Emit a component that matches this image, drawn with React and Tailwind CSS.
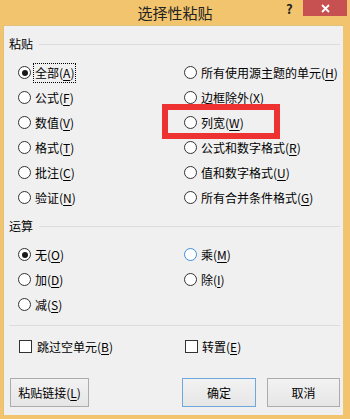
import React from "react";

const font = { fontFamily: '"Noto Sans CJK SC", "Microsoft YaHei", sans-serif' };

function Radio({ checked, hover }) {
  return (
    <span
      className={`relative flex h-[13px] w-[13px] shrink-0 items-center justify-center rounded-full border bg-white ${
        hover ? "border-[#3c8fdb]" : "border-[#333]"
      }`}
    >
      {checked && <span className="h-[6px] w-[6px] rounded-full bg-[#1a1a1a]" />}
    </span>
  );
}

function Check() {
  return <span className="h-[13px] w-[13px] shrink-0 border border-[#333] bg-white" />;
}

function Label({ text, k, focus }) {
  return (
    <span
      className={`px-[1px] leading-[18px] ${focus ? "outline outline-1 outline-dotted outline-[#000]" : ""}`}
    >
      {text}(<span className="underline underline-offset-2">{k}</span>)
    </span>
  );
}

function Option({ text, k, checked, focus, hover }) {
  return (
    <div className="flex h-[25px] items-center gap-[3px]">
      <Radio checked={checked} hover={hover} />
      <Label text={text} k={k} focus={focus} />
    </div>
  );
}

function Header({ title }) {
  return (
    <div className="flex h-[16px] items-center gap-[6px] pl-[5px] pr-[3px]">
      <span className="leading-[16px]">{title}</span>
      <div className="h-px flex-1 bg-[#dcdcdc]" />
    </div>
  );
}

function Btn({ children, primary, w }) {
  return (
    <div
      className={`flex h-[29px] ${w} items-center justify-center border bg-gradient-to-b from-[#f2f2f2] to-[#e6e6e6] ${
        primary ? "border-[#6ea6de]" : "border-[#acacac]"
      }`}
    >
      {children}
    </div>
  );
}

export default function App() {
  return (
    <div className="flex h-[419px] w-[350px] flex-col bg-[#f2c46d] text-[12px] text-black" style={font}>
      <div className="relative flex h-[25px] shrink-0 items-center justify-center">
        <span className="text-[15px] leading-[20px] text-[#222]">选择性粘贴</span>
        <span className="absolute left-[286px] top-[1px] text-[13px] font-bold leading-[15px] text-[#222]">?</span>
        <div className="absolute left-[303px] top-0 flex h-[16px] w-[44px] items-center justify-center bg-[#c75050]">
          <svg width="9" height="9" viewBox="0 0 9 9">
            <path d="M1 1L8 8M8 1L1 8" stroke="white" strokeWidth="1.8" />
          </svg>
        </div>
      </div>
      <div className="mb-[4px] ml-[3px] mr-[7px] flex flex-1 flex-col border-t border-l border-[#e2c17d] bg-[#f0f0f0]">
        <div className="mt-[10px]">
          <Header title="粘贴" />
        </div>
        <div className="relative mt-[8px]">
          <div className="grid grid-cols-[166px_1fr] pl-[14px]">
            <div className="flex flex-col">
              <Option text="全部" k="A" checked focus />
              <Option text="公式" k="F" />
              <Option text="数值" k="V" />
              <Option text="格式" k="T" />
              <Option text="批注" k="C" />
              <Option text="验证" k="N" />
            </div>
            <div className="flex flex-col">
              <Option text="所有使用源主题的单元" k="H" />
              <Option text="边框除外" k="X" />
              <Option text="列宽" k="W" />
              <Option text="公式和数字格式" k="R" />
              <Option text="值和数字格式" k="U" />
              <Option text="所有合并条件格式" k="G" />
            </div>
          </div>
          <div className="absolute left-[158px] top-[44px] h-[35px] w-[118px] border-[6px] border-[#ee3131]" />
        </div>
        <div className="mt-[8px]">
          <Header title="运算" />
        </div>
        <div className="mt-[8px] grid grid-cols-[166px_1fr] pl-[14px]">
          <div className="flex flex-col">
            <Option text="无" k="O" checked />
            <Option text="加" k="D" />
            <Option text="减" k="S" />
          </div>
          <div className="flex flex-col">
            <Option text="乘" k="M" hover />
            <Option text="除" k="I" />
          </div>
        </div>
        <div className="ml-[5px] mr-[3px] mt-[8px] h-px bg-[#dcdcdc]" />
        <div className="mt-[8px] grid grid-cols-[166px_1fr] pl-[15px]">
          <div className="flex h-[25px] items-center gap-[4px]">
            <Check />
            <Label text="跳过空单元" k="B" />
          </div>
          <div className="flex h-[25px] items-center gap-[3px]">
            <Check />
            <Label text="转置" k="E" />
          </div>
        </div>
        <div className="mt-[19px] flex items-center pl-[6px] pr-[3px]">
          <Btn w="w-[79px]">
            <Label text="粘贴链接" k="L" />
          </Btn>
          <div className="flex-1" />
          <Btn w="w-[74px]" primary>
            确定
          </Btn>
          <div className="w-[11px]" />
          <Btn w="w-[73px]">取消</Btn>
        </div>
      </div>
    </div>
  );
}
